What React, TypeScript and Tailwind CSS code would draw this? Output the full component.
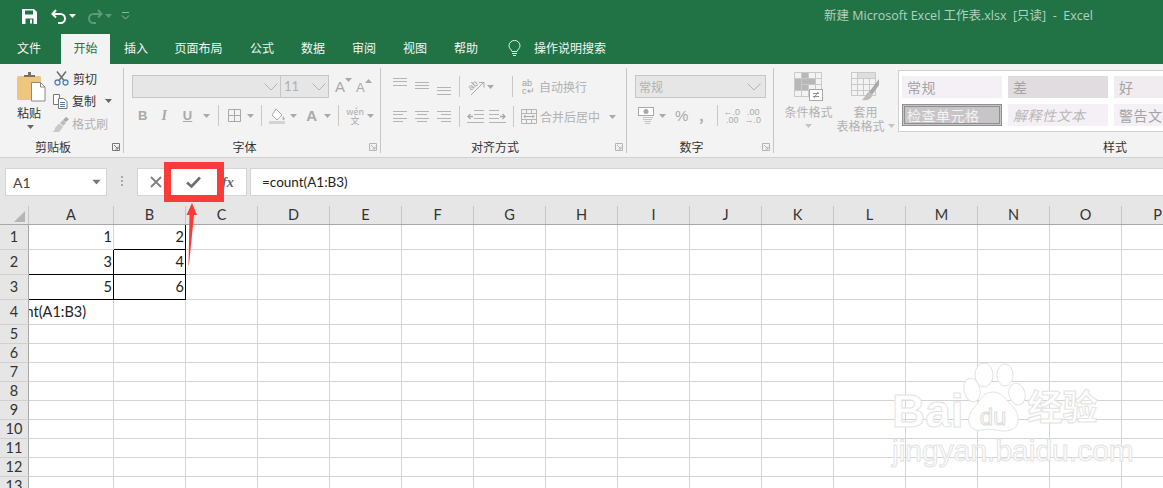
import React from "react";

const cjk = "font-['Noto_Sans_CJK_SC','Noto_Sans',sans-serif]";

const Caret = ({ color = "#a9a9a9", className = "" }: { color?: string; className?: string }) => (
  <svg width="7" height="4" viewBox="0 0 7 4" className={className}>
    <path d="M0 0h7L3.5 4z" fill={color} />
  </svg>
);

const Launcher = ({ color = "#b5b5b5" }: { color?: string }) => (
  <svg width="8" height="8" viewBox="0 0 8 8" className="shrink-0">
    <path d="M.5 7.5V.5h7v7zM2 2l4 4M6 3.5V6H3.5" fill="none" stroke={color} />
  </svg>
);

// rows are [y, x1, x2]
const Lines = ({ rows, className = "" }: { rows: [number, number, number][]; className?: string }) => (
  <svg width="14" height="17" viewBox="0 0 14 17" className={`shrink-0 ${className}`}>
    {rows.map(([y, a, b], i) => (
      <path key={i} d={`M${a} ${y + 0.5}H${b}`} stroke="#b4b4b4" />
    ))}
  </svg>
);

const Sep = ({ className = "" }: { className?: string }) => (
  <div className={`w-px h-[21px] shrink-0 bg-[#c8c8c8] ${className}`} />
);

const ComboArrow = () => (
  <svg width="14" height="8" viewBox="0 0 14 8">
    <path d="M.5.5 7 7 13.5.5" fill="none" stroke="#b4b4b4" />
  </svg>
);

const PasteIcon = () => (
  <svg width="29" height="30" viewBox="0 0 29 30">
    <rect x="0" y="4" width="24" height="24" rx="1.5" fill="#edc67f" />
    <path d="M7 5V3h4V0h3v3h4v2z" fill="#7a6f63" />
    <path d="M14.500 10.500h9l4.500 4.500v14h-13.500z" fill="#fff" stroke="#8a8a8a" />
    <path d="M23.500 10.500v4.500h4.500" fill="none" stroke="#8a8a8a" />
  </svg>
);

const ScissorsIcon = () => (
  <svg width="15" height="15" viewBox="0 0 15 15">
    <path d="M3 .5l7 9M12 .5l-7 9" stroke="#6d6d6d" strokeWidth="1.500" />
    <circle cx="3.500" cy="11.500" r="2.500" fill="none" stroke="#4d84bd" strokeWidth="1.300" />
    <circle cx="11.500" cy="11.500" r="2.500" fill="none" stroke="#4d84bd" strokeWidth="1.300" />
  </svg>
);

const CopyIcon = () => (
  <svg width="15" height="15" viewBox="0 0 15 15">
    <path d="M.5.500h6v10h-6z" fill="#fff" stroke="#777" />
    <path d="M5.500 4.500h5l3.500 3v7h-8.500z" fill="#fff" stroke="#777" />
    <path d="M7 8.500h5M7 10.500h5M7 12.500h5" stroke="#4d84bd" />
  </svg>
);

const BrushIcon = () => (
  <svg width="17" height="15" viewBox="0 0 17 15">
    <path d="M8 6l3-3 3 3-3 3z" fill="#bdbdbd" />
    <path d="M11 3l3-3 3 2-3 3z" fill="#a9a9a9" />
    <path d="M7 6.500l4 3.500-4 5H0c2-1 3-2 3-4z" fill="#c9c9c9" />
  </svg>
);

const FillIcon = () => (
  <svg width="17" height="16" viewBox="0 0 17 16">
    <path d="M7 1l6 6-5 5-5-5z" fill="#fff" stroke="#a9a9a9" />
    <path d="M14 8c1 1.500 2 2.500 1.500 3.500-.5.800-2 .5-2-.7z" fill="#a9a9a9" />
    <rect y="13" width="16" height="3" fill="#d4d4d4" />
  </svg>
);

const BorderIcon = () => (
  <svg width="13" height="13" viewBox="0 0 13 13">
    <path d="M.5.500h12v12H.5zM6.500.5v12M.5 6.500h12" fill="none" stroke="#a9a9a9" />
  </svg>
);

const OrientIcon = () => (
  <svg width="18" height="18" viewBox="0 0 18 18" className="overflow-visible">
    <path d="M4 17 16 5M12 4.500h5v5" fill="none" stroke="#a9a9a9" />
    <text x="1" y="11" fontSize="9" fill="#a0a0a0" transform="rotate(-42 5 8)" fontFamily="Liberation Sans, sans-serif">ab</text>
  </svg>
);

const IndentIcon = ({ flip = false }: { flip?: boolean }) => (
  <svg width="17" height="14" viewBox="0 0 17 14" className={flip ? "-scale-x-100" : ""}>
    <path d="M7 .5h10M7 4.500h10M7 8.500h10M0 12.500h17" stroke="#b4b4b4" />
    <path d="M6 6.500H1M3.500 4l-2.500 2.500 2.500 2.500" fill="none" stroke="#a9a9a9" strokeWidth="1.300" />
  </svg>
);

const MergeIcon = () => (
  <svg width="16" height="15" viewBox="0 0 16 15">
    <path d="M.5.500h15v14H.5zM.5 4.500h15M.5 10.500h15M5.500.5v4M10.500.5v4M5.500 10.500v4M10.500 10.500v4" fill="none" stroke="#b4b4b4" />
    <path d="M3 7.500h10M4.500 6l-1.500 1.500 1.500 1.500M11.500 6l1.500 1.500-1.500 1.500" fill="none" stroke="#a9a9a9" />
  </svg>
);

const CurrencyIcon = () => (
  <svg width="17" height="17" viewBox="0 0 17 17">
    <rect x=".5" y=".5" width="15" height="8" fill="#fff" stroke="#a9a9a9" />
    <circle cx="8" cy="4.500" r="2.500" fill="#a9a9a9" />
    <path d="M5 10.500h10M5 12.500h9M6 14.500h7M7 16.500h5" stroke="#c4c4c4" />
  </svg>
);

const CondIcon = () => (
  <svg width="29" height="29" viewBox="0 0 29 29">
    <path d="M.5.500h27v24H.5zM7.500.5v24M14.500.5v24M21.500.5v24M.5 6.500h27M.5 12.500h27M.5 18.500h27" fill="none" stroke="#c9c9c9" />
    <path d="M8 1h6v5H8zM1 7h6v11H1zM8 7h13v5H8zM8 13h6v5H8z" fill="#b8b8b8" />
    <rect x="15.500" y="17.500" width="13" height="11" fill="#fff" stroke="#a9a9a9" />
    <path d="M19 21.500h6M19 24.500h6M24 20l-4 6" stroke="#8e8e8e" fill="none" />
  </svg>
);

const TableIcon = () => (
  <svg width="29" height="30" viewBox="0 0 29 30">
    <path d="M.5.500h24v23H.5zM6.500.5v23M12.500.5v23M18.500.5v23M.5 6.500h24M.5 12.500h24M.5 18.500h24" fill="none" stroke="#c9c9c9" />
    <path d="M7 1h17v5H7z" fill="#dedede" />
    <path d="M28 7 18 20l3 3 7-10z" fill="#a9a9a9" />
    <path d="M18 20c-3 1-3 4-7 8 5 1 10-1 10-5z" fill="#bdbdbd" />
  </svg>
);

const Bulb = () => (
  <svg width="13" height="17" viewBox="0 0 13 17">
    <path d="M4 11.500C3.500 9.500 1 8.500 1 5.800A5.400 5.300 0 0 1 12 5.800C12 8.500 9.500 9.500 9 11.500z" fill="none" stroke="#e4efe9" />
    <path d="M4 13.500h5M5 15.500h3" stroke="#e4efe9" />
  </svg>
);

const tabs = [
  { label: "文件", cls: "w-[48px] ml-[5px]" },
  { label: "开始", cls: "w-[49px] ml-[8px] bg-[#f3f3f3] text-[#217346]" },
  { label: "插入", cls: "w-[48px] ml-[2px]" },
  { label: "页面布局", cls: "w-[71px] ml-[3px]" },
  { label: "公式", cls: "w-[48px] ml-[4px]" },
  { label: "数据", cls: "w-[48px] ml-[3px]" },
  { label: "审阅", cls: "w-[48px] ml-[3px]" },
  { label: "视图", cls: "w-[48px] ml-[3px]" },
  { label: "帮助", cls: "w-[48px] ml-[3px]" },
];

const TitleBar = () => (
  <div className={`h-[64px] bg-[#217346] flex flex-col ${cjk}`}>
    <div className="h-[34px] pb-[2px] flex items-center">
      <svg width="15" height="15" viewBox="0 0 15 15" className="ml-[22px]">
        <path d="M0 0h12l3 3v12H0z" fill="#fff" />
        <path d="M3 1.500h8v4H3z" fill="#217346" />
        <path d="M3.500 9.500h8V15h-8z" fill="#217346" />
        <path d="M8 10.500h2v4H8z" fill="#fff" />
      </svg>
      <svg width="16" height="15" viewBox="0 0 16 15" className="ml-[14px]">
        <path d="M5 1 1.500 5 5 8.500M2 5h7.500a4 4 0 0 1 0 9H7" fill="none" stroke="#fff" strokeWidth="2" />
      </svg>
      <Caret color="#fff" className="ml-[2px]" />
      <svg width="16" height="15" viewBox="0 0 16 15" className="ml-[11px]">
        <path d="M11 1l3.500 4L11 8.500M14 5H6.500a4 4 0 0 0 0 9H9" fill="none" stroke="#5d9a79" strokeWidth="2" />
      </svg>
      <Caret color="#5d9a79" className="ml-[2px]" />
      <svg width="9" height="9" viewBox="0 0 9 9" className="ml-[9px]">
        <path d="M1 .5h7M1 3.500l3.500 3.500L8 3.500" fill="none" stroke="#8db7a0" />
      </svg>
      <div className="ml-[694px] text-[12.5px] leading-none text-[#b4d0c0] whitespace-pre font-['Open_Sans','Noto_Sans_CJK_SC',sans-serif]">
        新建 Microsoft Excel 工作表.xlsx  [只读]  -  Excel
      </div>
    </div>
    <div className="h-[30px] flex items-stretch text-[12px] text-[#f2f7f4]">
      {tabs.map((t) => (
        <div key={t.label} className={`flex items-center justify-center pb-[2px] ${t.cls}`}>
          {t.label}
        </div>
      ))}
      <div className="ml-[18px] pb-[2px] flex items-center">
        <Bulb />
      </div>
      <div className="ml-[13px] pb-[2px] flex items-center">操作说明搜索</div>
    </div>
  </div>
);

const Group = ({
  label,
  width,
  labelCls = "",
  launcher = true,
  launcherColor,
  children,
}: {
  label: string;
  width: string;
  labelCls?: string;
  launcher?: boolean;
  launcherColor?: string;
  children: React.ReactNode;
}) => (
  <div className={`${width} shrink-0 h-[85px] mt-[4px] flex flex-col border-r border-[#c6c6c6] last:border-r-0`}>
    <div className="flex-1 min-h-0">{children}</div>
    <div className="h-[16px] flex items-center pr-[3px] pt-[3px]">
      <div className={`flex-1 text-center text-[12px] leading-none text-[#333] ${labelCls}`}>{label}</div>
      {launcher && <Launcher color={launcherColor} />}
    </div>
  </div>
);

const Ribbon = () => (
  <div className={`h-[94px] bg-[#f3f3f3] border-b border-[#d2d2d2] flex text-[12px] leading-none ${cjk}`}>
    <Group label="剪贴板" width="w-[124px]" labelCls="pr-[6px]" launcherColor="#777">
      <div className="flex">
        <div className="w-[52px] pl-[17px] pt-[4px] flex flex-col">
          <PasteIcon />
          <div className="mt-[5px] text-[#333]">粘贴</div>
          <Caret color="#666" className="mt-[6px] ml-[10px]" />
        </div>
        <div className="flex flex-col text-[#333]">
          <div className="h-[23px] flex items-center gap-[4px] mt-[-1px] pl-[2px]">
            <ScissorsIcon />
            剪切
          </div>
          <div className="h-[22px] flex items-center gap-[4px] pl-[1px]">
            <CopyIcon />
            复制
            <Caret color="#666" className="ml-[5px]" />
          </div>
          <div className="h-[24px] flex items-center gap-[3px] text-[#b1b1b1]">
            <BrushIcon />
            格式刷
          </div>
        </div>
      </div>
    </Group>

    <Group label="字体" width="w-[257px]" labelCls="pr-[4px] ">
      <div className="pl-[8px] pt-[7px] flex items-center">
        <div className="w-[149px] h-[23px] bg-[#e6e6e6] border border-[#c6c6c6] flex items-center justify-end pr-[2px]">
          <ComboArrow />
        </div>
        <div className="w-[48px] h-[23px] bg-[#e6e6e6] border border-[#c6c6c6] border-l-0 flex items-center justify-between pl-[3px] pr-[2px] text-[#b1b1b1] font-['Lato',sans-serif] text-[13px]">
          11
          <ComboArrow />
        </div>
        <div className="ml-[6px] flex items-start text-[#a9a9a9] font-['Liberation_Sans',sans-serif] text-[15px]">
          A<Caret className="mt-[-1px]" />
        </div>
        <div className="ml-[4px] flex items-start text-[#a9a9a9] font-['Liberation_Sans',sans-serif] text-[13px] mt-[2px]">
          A<Caret className="-scale-y-100 mt-[-2px]" />
        </div>
      </div>
      <div className="mt-[7px] h-[21px] flex items-center text-[#a9a9a9] font-['Liberation_Sans',sans-serif] text-[13px]">
        <span className="ml-[14px] font-bold">B</span>
        <span className="ml-[14px] font-['Liberation_Serif',serif] italic font-bold text-[14px]">I</span>
        <span className="ml-[16px] underline font-bold">U</span>
        <Caret className="ml-[11px]" />
        <Sep className="ml-[8px]" />
        <div className="ml-[9px]"><BorderIcon /></div>
        <Caret className="ml-[6px]" />
        <Sep className="ml-[7px]" />
        <div className="ml-[7px]"><FillIcon /></div>
        <Caret className="ml-[4px]" />
        <span className="ml-[9px] text-[15px] font-bold">A</span>
        <Caret className="ml-[7px]" />
        <Sep className="ml-[7px]" />
        <div className={`ml-[8px] flex flex-col items-center text-[9px] leading-[9px] w-[16px] ${cjk}`}>
          <span>wén</span>
          <span>文</span>
        </div>
        <Caret className="ml-[4px]" />
      </div>
    </Group>

    <Group label="对齐方式" width="w-[246px]" labelCls="pr-[6px]">
      <div className="pt-[7px] pl-[12px] h-[30px] flex items-center text-[#b1b1b1]">
        <Lines rows={[[0, 0, 14], [3, 0, 14], [7, 0, 14]]} />
        <Lines rows={[[4, 0, 14], [7, 0, 14], [10, 0, 14]]} className="ml-[8px]" />
        <Lines rows={[[9, 0, 14], [12, 0, 14], [16, 0, 14]]} className="ml-[8px]" />
        <Sep className="ml-[8px]" />
        <div className="ml-[7px]"><OrientIcon /></div>
        <Caret className="ml-[2px]" />
        <Sep className="ml-[18px]" />
        <div className="ml-[9px] w-[14px] text-[9px] leading-[8px] whitespace-nowrap font-['Liberation_Sans',sans-serif] text-[#a0a0a0]">ab<br />c↵</div>
        <span className="ml-[3px]">自动换行</span>
      </div>
      <div className="mt-[8px] pl-[12px] h-[21px] flex items-center text-[#b1b1b1]">
        <Lines rows={[[3, 0, 14], [6, 0, 10], [10, 0, 14], [13, 0, 10]]} />
        <Lines rows={[[3, 0, 14], [6, 2, 12], [10, 0, 14], [13, 2, 12]]} className="ml-[8px]" />
        <Lines rows={[[3, 0, 14], [6, 4, 14], [10, 0, 14], [13, 4, 14]]} className="ml-[8px]" />
        <Sep className="ml-[8px]" />
        <div className="ml-[7px]"><IndentIcon /></div>
        <div className="ml-[5px]"><IndentIcon flip /></div>
        <Sep className="ml-[7px]" />
        <div className="ml-[7px]"><MergeIcon /></div>
        <span className="ml-[3px]">合并后居中</span>
        <Caret className="ml-[9px]" />
      </div>
    </Group>

    <Group label="数字" width="w-[147px]" labelCls="pr-[6px]">
      <div className="pl-[8px] pt-[7px]">
        <div className="w-[131px] h-[23px] bg-[#e6e6e6] border border-[#c6c6c6] flex items-center justify-between pl-[3px] pr-[4px] text-[#b1b1b1]">
          常规
          <ComboArrow />
        </div>
      </div>
      <div className="mt-[7px] pl-[11px] h-[21px] flex items-center text-[#a9a9a9]">
        <CurrencyIcon />
        <Caret className="ml-[4px]" />
        <span className="ml-[9px] text-[15px] font-['Liberation_Sans',sans-serif]">%</span>
        <span className="ml-[11px] text-[13px] font-bold">,</span>
        <Sep className="ml-[13px]" />
        <div className="ml-[6px] w-[15px] text-[9px] leading-[8px] text-right font-['Liberation_Sans',sans-serif]">←.0<br />.00</div>
        <div className="ml-[6px] w-[15px] text-[9px] leading-[8px] text-right font-['Liberation_Sans',sans-serif]">.00<br />→.0</div>
      </div>
    </Group>

    <Group label="样式" width="flex-1" labelCls="!text-left pl-[329px]" launcher={false}>
      <div className="flex text-[#b1b1b1]">
        <div className="w-[59px] shrink-0 pl-[10px] pt-[4px] flex flex-col items-center">
          <CondIcon />
          <span className="mt-[5px] whitespace-nowrap">条件格式</span>
          <Caret color="#c4c4c4" className="mt-[6px]" />
        </div>
        <div className="w-[65px] shrink-0 pt-[4px] flex flex-col items-center">
          <TableIcon />
          <span className="mt-[4px] whitespace-nowrap">套用</span>
          <span className="mt-[2px] whitespace-nowrap flex items-center gap-[3px]">
            表格格式<Caret color="#c4c4c4" />
          </span>
        </div>
        <div className="mt-[2px] flex-1 min-w-0 h-[62px] bg-white border border-r-0 border-[#d0d0d0] pl-[3px] pt-[5px] overflow-hidden text-[#a4a4a4] text-[14px] tracking-[0.5px]">
          <div className="flex gap-[6px]">
            <div className="w-[100px] h-[22px] shrink-0 bg-[#f5f0f6] pl-[5px] pb-[1px] flex items-center">常规</div>
            <div className="w-[100px] h-[22px] shrink-0 bg-[#e0dce0] pl-[5px] pb-[1px] flex items-center">差</div>
            <div className="w-[100px] h-[22px] shrink-0 bg-[#f0ecef] pl-[5px] pb-[1px] flex items-center">好</div>
          </div>
          <div className="flex gap-[6px] mt-[6px]">
            <div className="w-[100px] h-[22px] shrink-0 bg-[#c8c5c8] border-[3px] border-double border-[#8f8f8f] pl-[2px] flex items-center text-[#f3f3f3]">检查单元格</div>
            <div className="w-[100px] h-[22px] shrink-0 bg-[#f5f0f6] pl-[5px] pb-[1px] flex items-center italic text-[#b8b8b8]">解释性文本</div>
            <div className="w-[100px] h-[22px] shrink-0 bg-[#f5f0f6] pl-[5px] pb-[1px] flex items-center whitespace-nowrap">警告文本</div>
          </div>
        </div>
      </div>
    </Group>
  </div>
);

const FormulaBar = () => (
  <div className="h-[48px] bg-[#e6e6e6] flex items-start pt-[10px] font-['Lato',sans-serif]">
    <div className="ml-[5px] w-[102px] h-[28px] bg-white border border-[#d4d4d4] flex items-center justify-between pl-[7px] pr-[6px] text-[14px] text-[#444]">
      A1
      <Caret color="#777" className="scale-125" />
    </div>
    <div className="ml-[14px] mt-[8px] flex flex-col gap-[2px]">
      <div className="w-[2px] h-[2px] bg-[#aaa]" />
      <div className="w-[2px] h-[2px] bg-[#aaa]" />
      <div className="w-[2px] h-[2px] bg-[#aaa]" />
    </div>
    <div className="ml-[14px] w-[110px] h-[28px] bg-white border border-[#d4d4d4] flex items-center">
      <svg width="12" height="12" viewBox="0 0 12 12" className="ml-[12px]">
        <path d="M1 1l10 10M11 1 1 11" stroke="#808080" strokeWidth="1.800" />
      </svg>
      <svg width="15" height="12" viewBox="0 0 15 12" className="ml-[24px]">
        <path d="M1 6.500 5.500 10.500 14 1.500" fill="none" stroke="#6e6e6e" strokeWidth="2.600" />
      </svg>
      <span className="ml-[21px] font-['Liberation_Serif',serif] italic font-bold text-[14px] text-[#666]">fx</span>
    </div>
    <div className="ml-[3px] flex-1 h-[28px] bg-white border border-r-0 border-[#d4d4d4] flex items-center pl-[11px] text-[13.5px] text-[#222]">
      =count(A1:B3)
    </div>
  </div>
);

const cols = ["A", "B", "C", "D", "E", "F", "G", "H", "I", "J", "K", "L", "M", "N", "O", "P"];
const bodyCols = cols.slice(2);

const SheetCell = ({ cls, children }: { cls: string; children?: React.ReactNode }) => (
  <div className={`shrink-0 box-border border-r border-b flex items-center justify-end overflow-hidden pr-[1px] pt-[1px] ${cls}`}>
    {children}
  </div>
);

const Blanks = ({ height }: { height: string }) => (
  <>
    {bodyCols.map((c) => (
      <div key={c} className={`w-[72px] shrink-0 border-r border-b border-[#d4d4d4] ${height}`} />
    ))}
  </>
);

const RowHead = ({ n, height }: { n: number; height: string }) => (
  <div className={`w-[29px] shrink-0 ${height} bg-[#e6e6e6] border-r border-b border-r-[#a8a8a8] border-b-[#d0d0d0] flex items-center justify-center pt-[1px] text-[#333]`}>
    {n}
  </div>
);

const Sheet = () => (
  <div className="flex-1 min-h-0 overflow-hidden bg-white font-['Lato',sans-serif] text-[14.5px] leading-none text-[#222]">
    <div className="h-[19px] flex bg-[#e6e6e6] border-b border-[#a8a8a8]">
      <div className="w-[29px] shrink-0 border-r border-[#c6c6c6] flex items-end justify-end pr-[3px] pb-[2px]">
        <svg width="11" height="11" viewBox="0 0 11 11"><path d="M11 0v11H0z" fill="#b5b5b5" /></svg>
      </div>
      {cols.map((c, i) => (
        <div key={c} className={`${i === 0 ? "w-[85px]" : "w-[72px]"} shrink-0 border-r border-[#c6c6c6] flex items-center justify-center text-[#333]`}>
          {c}
        </div>
      ))}
    </div>

    <div className="flex">
      <RowHead n={1} height="h-[25px]" />
      <SheetCell cls="w-[85px] h-[25px] border-[#d4d4d4]">1</SheetCell>
      <SheetCell cls="w-[72px] h-[25px] border-b-black border-r-black">2</SheetCell>
      <Blanks height="h-[25px]" />
    </div>
    <div className="flex">
      <RowHead n={2} height="h-[25px]" />
      <SheetCell cls="w-[85px] h-[25px] border-black">3</SheetCell>
      <SheetCell cls="w-[72px] h-[25px] border-black">4</SheetCell>
      <Blanks height="h-[25px]" />
    </div>
    <div className="flex">
      <RowHead n={3} height="h-[25px]" />
      <SheetCell cls="w-[85px] h-[25px] border-black">5</SheetCell>
      <SheetCell cls="w-[72px] h-[25px] border-black">6</SheetCell>
      <Blanks height="h-[25px]" />
    </div>
    <div className="flex">
      <RowHead n={4} height="h-[25px]" />
      <div className="w-[85px] h-[25px] shrink-0 border-r border-b border-[#d4d4d4] overflow-hidden flex items-center pt-[1px]">
        <span className="whitespace-nowrap -ml-[35px]">=count(A1:B3)</span>
      </div>
      <div className="w-[72px] h-[25px] shrink-0 border-r border-b border-[#d4d4d4]" />
      <Blanks height="h-[25px]" />
    </div>
    {[5, 6, 7, 8, 9, 10, 11, 12, 13].map((n) => (
      <div key={n} className="flex">
        <RowHead n={n} height="h-[19px]" />
        <div className="w-[85px] h-[19px] shrink-0 border-r border-b border-[#d4d4d4]" />
        <div className="w-[72px] h-[19px] shrink-0 border-r border-b border-[#d4d4d4]" />
        <Blanks height="h-[19px]" />
      </div>
    ))}
  </div>
);

const Watermark = () => (
  <div className="absolute left-[892px] top-[363px] w-[215px] h-[104px] pointer-events-none select-none">
    <div className="flex items-start h-[70px]">
      <span className="mt-[25px] font-['Liberation_Sans',sans-serif] font-bold text-[46px] leading-none text-white [-webkit-text-stroke:1px_#e3e3e3]">Bai</span>
      <svg width="63" height="70" viewBox="0 0 63 70" className="-ml-[1px] shrink-0">
        <g fill="#fff" stroke="#e3e3e3">
          <ellipse cx="21" cy="12" rx="9" ry="12" />
          <ellipse cx="42" cy="12" rx="8" ry="11" />
          <ellipse cx="9" cy="27" rx="8" ry="12" transform="rotate(-12 9 27)" />
          <ellipse cx="54" cy="31" rx="8" ry="11" transform="rotate(-15 54 31)" />
          <path d="M30 29c9 0 13 8 20 15 9 10 7 24-9 24-7 0-13-3-21-1C5 70 2 55 10 46c6-6 9-17 20-17z" />
        </g>
        <text x="30" y="62" textAnchor="middle" fontSize="24" fill="#fff" stroke="#dcdcdc" fontFamily="Liberation Sans, sans-serif">du</text>
      </svg>
      <span className={`mt-[24px] ml-[2px] text-[35px] leading-none font-bold text-white [-webkit-text-stroke:1px_#e3e3e3] ${cjk}`}>经验</span>
    </div>
    <div className="mt-[3px] font-['Liberation_Sans',sans-serif] text-[30px] leading-none whitespace-nowrap text-white [-webkit-text-stroke:1px_#e3e3e3]">
      jingyan.baidu.com
    </div>
  </div>
);

const Annotation = () => (
  <>
    <div className="absolute left-[164px] top-[162px] w-[60px] h-[40px] border-[7px] border-[#fb3a3a]" />
    <svg width="12" height="64" viewBox="0 0 12 64" className="absolute left-[186px] top-[203px]">
      <path d="M6 0 11 12H8L3 62 2.500 62 3.500 12H.5z" fill="#fb3a3a" />
    </svg>
  </>
);

export default function App() {
  return (
    <div className="relative w-[1163px] h-[488px] overflow-hidden flex flex-col bg-white">
      <TitleBar />
      <Ribbon />
      <FormulaBar />
      <Sheet />
      <Annotation />
      <Watermark />
    </div>
  );
}
